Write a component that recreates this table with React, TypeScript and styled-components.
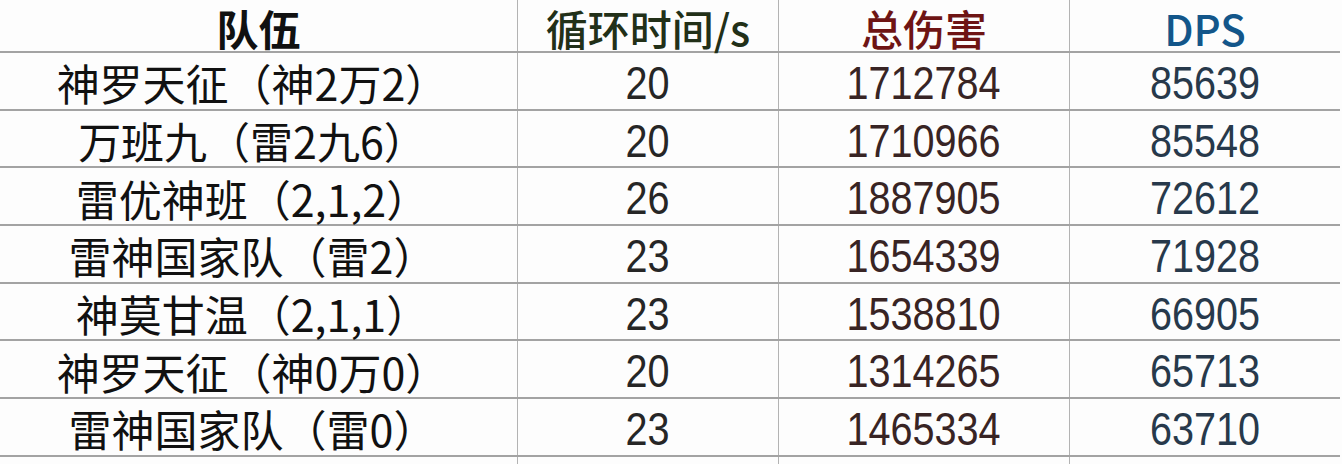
import React, { ReactElement } from 'react';
import styled, { createGlobalStyle } from 'styled-components';

const GlobalStyle = createGlobalStyle`
  body {
    margin: 0;
    background: #fdfdfd;
    overflow: hidden;
  }
`;

const Sheet = styled.div`
  width: 1340px;
  height: 464px;
  overflow: hidden;
  background: #fdfdfd;
`;

const Row = styled.div<{ $head?: boolean }>`
  display: grid;
  grid-template-columns: 517px 261px 291px 271px;
  height: ${(p) => (p.$head ? '51px' : '55.7px')};
  border-bottom: 2px solid #a3a3a3;
`;

const Cell = styled.div<{ $first?: boolean }>`
  display: flex;
  align-items: center;
  justify-content: center;
  border-left: ${(p) => (p.$first ? 'none' : '1px solid #b3b3b3')};
  padding-top: 4px;
  box-sizing: border-box;
`;

const HeadText = styled.span<{ $color: string; $bold?: boolean }>`
  font-family: "Noto Sans CJK SC", "Noto Sans", sans-serif;
  font-size: 42px;
  font-weight: ${(p) => (p.$bold ? 700 : 500)};
  color: ${(p) => p.$color};
  line-height: 1;
  white-space: nowrap;
`;

const TeamText = styled.span`
  font-family: "Noto Sans CJK SC", sans-serif;
  font-size: 43px;
  font-weight: 400;
  color: #111;
  line-height: 1;
  white-space: nowrap;
  margin-left: -12px;
`;

const NumText = styled.span<{ $color: string }>`
  display: inline-block;
  font-family: "Liberation Sans", sans-serif;
  font-size: 46px;
  color: ${(p) => p.$color};
  line-height: 1;
  white-space: nowrap;
  transform: scaleX(0.86);
`;

type Team = { name: string; cycle: number; damage: number; dps: number };

const teams: Team[] = [
  { name: '神罗天征（神2万2）', cycle: 20, damage: 1712784, dps: 85639 },
  { name: '万班九（雷2九6）', cycle: 20, damage: 1710966, dps: 85548 },
  { name: '雷优神班（2,1,2）', cycle: 26, damage: 1887905, dps: 72612 },
  { name: '雷神国家队（雷2）', cycle: 23, damage: 1654339, dps: 71928 },
  { name: '神莫甘温（2,1,1）', cycle: 23, damage: 1538810, dps: 66905 },
  { name: '神罗天征（神0万0）', cycle: 20, damage: 1314265, dps: 65713 },
  { name: '雷神国家队（雷0）', cycle: 23, damage: 1465334, dps: 63710 },
];

export default function App(): ReactElement {
  return (
    <Sheet>
      <GlobalStyle />
      <Row $head>
        <Cell $first>
          <HeadText $color="#111" $bold>队伍</HeadText>
        </Cell>
        <Cell>
          <HeadText $color="#223018">循环时间/s</HeadText>
        </Cell>
        <Cell>
          <HeadText $color="#6e1414">总伤害</HeadText>
        </Cell>
        <Cell>
          <HeadText $color="#13568a">DPS</HeadText>
        </Cell>
      </Row>
      {teams.map((t) => (
        <Row key={t.name}>
          <Cell $first>
            <TeamText>{t.name}</TeamText>
          </Cell>
          <Cell>
            <NumText $color="#262626">{t.cycle}</NumText>
          </Cell>
          <Cell>
            <NumText $color="#382424">{t.damage}</NumText>
          </Cell>
          <Cell>
            <NumText $color="#27394b">{t.dps}</NumText>
          </Cell>
        </Row>
      ))}
      <Row>
        <Cell $first />
        <Cell />
        <Cell />
        <Cell />
      </Row>
    </Sheet>
  );
}
